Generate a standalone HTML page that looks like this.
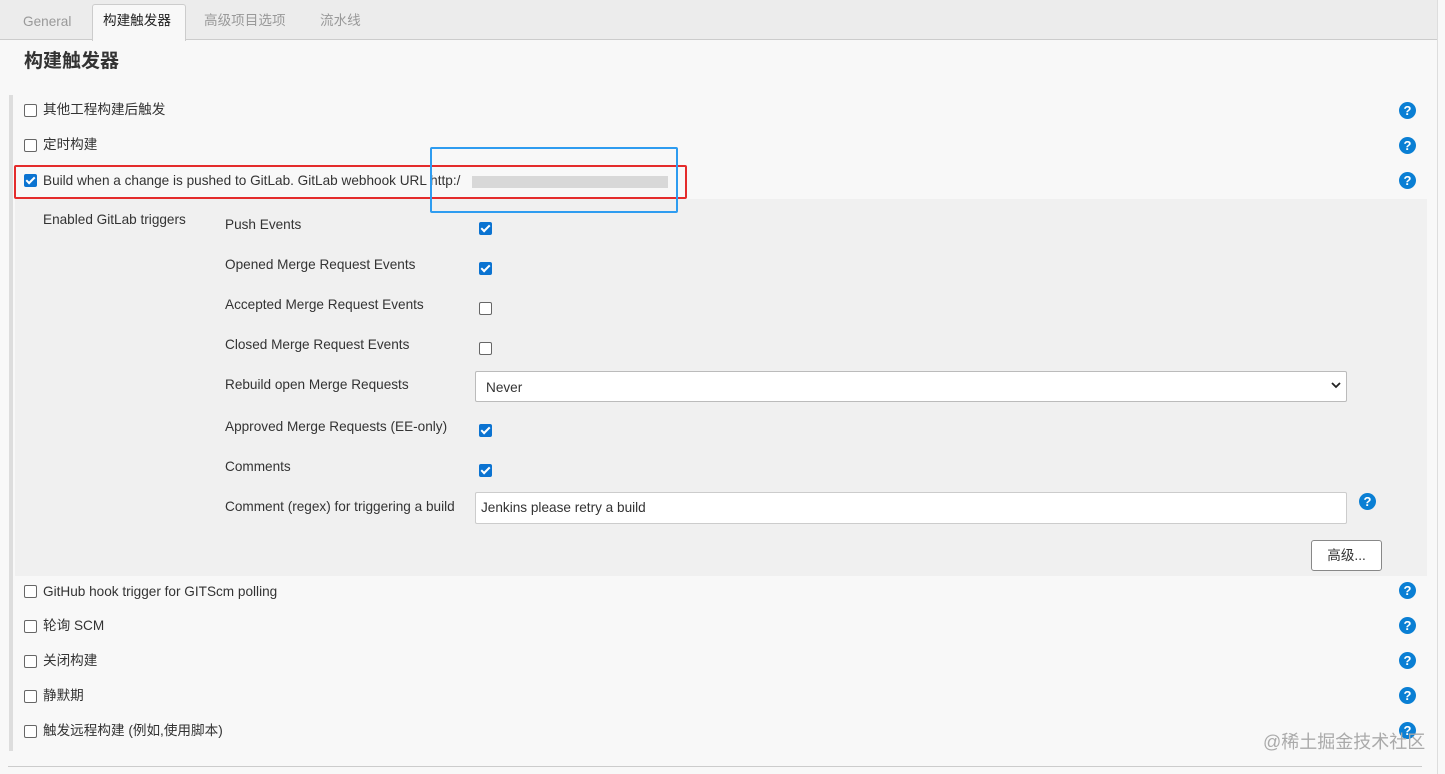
<!DOCTYPE html><html><head><meta charset="utf-8"><style>
body{margin:0;width:1445px;height:774px;background:#f8f8f8;font-family:"Liberation Sans","Noto Sans CJK SC",sans-serif;font-size:13.6px;color:#333;position:relative;overflow:hidden}
.a{position:absolute}
.cb{position:absolute;width:11px;height:11px;border:1px solid #666;border-radius:2px;background:#fff}
.cb.on{background:#0b73d1;border-color:#0b73d1}
.cb.on:after{content:"";position:absolute;left:3px;top:0px;width:3px;height:7px;border:solid #fff;border-width:0 2px 2px 0;transform:rotate(45deg)}
.h{position:absolute;width:17px;height:17px;border-radius:50%;background:#0a7fd4;color:#fff;font-weight:bold;font-size:13px;text-align:center;line-height:17px;font-family:"Liberation Sans",sans-serif}
.t{position:absolute;white-space:nowrap;line-height:16px}
</style></head><body>
<div class="a" style="left:0;top:0;width:1437px;height:39px;background:#ececec;border-bottom:1px solid #ccc"></div>
<div class="t" style="left:23px;top:14px;color:#999">General</div>
<div class="a" style="left:92px;top:4px;width:92px;height:36px;background:#f8f8f8;border:1px solid #ccc;border-bottom:none;border-radius:3px 3px 0 0"></div>
<div class="t" style="left:103px;top:13px;color:#222">构建触发器</div>
<div class="t" style="left:204px;top:13px;color:#999">高级项目选项</div>
<div class="t" style="left:320px;top:13px;color:#999">流水线</div>
<div class="a" style="left:1437px;top:0;width:1px;height:774px;background:#ddd"></div>
<div class="t" style="left:24px;top:50px;font-size:19px;line-height:24px;font-weight:bold;color:#333">构建触发器</div>
<div class="a" style="left:9px;top:95px;width:4px;height:656px;background:#ddd"></div>
<div class="a" style="left:15px;top:199px;width:1412px;height:377px;background:#f0f0f0"></div>
<div class="cb" style="left:24px;top:104px"></div><div class="t" style="left:43px;top:102px">其他工程构建后触发</div><div class="h" style="left:1399px;top:102px">?</div>
<div class="cb" style="left:24px;top:139px"></div><div class="t" style="left:43px;top:137px">定时构建</div><div class="h" style="left:1399px;top:137px">?</div>
<div class="cb on" style="left:24px;top:174px"></div><div class="t" style="left:43px;top:173px">Build when a change is pushed to GitLab. GitLab webhook URL http:/</div><div class="h" style="left:1399px;top:172px">?</div>
<div class="a" style="left:472px;top:176px;width:196px;height:12px;background:#d8d8d8"></div>
<div class="a" style="left:14px;top:165px;width:669px;height:30px;border:2px solid #e42b2b;border-radius:2px"></div>
<div class="a" style="left:430px;top:147px;width:244px;height:62px;border:2px solid #2e9cf0;border-radius:2px"></div>
<div class="t" style="left:43px;top:212px">Enabled GitLab triggers</div>
<div class="t" style="left:225px;top:217px">Push Events</div><div class="cb on" style="left:479px;top:222px"></div>
<div class="t" style="left:225px;top:257px">Opened Merge Request Events</div><div class="cb on" style="left:479px;top:262px"></div>
<div class="t" style="left:225px;top:297px">Accepted Merge Request Events</div><div class="cb" style="left:479px;top:302px"></div>
<div class="t" style="left:225px;top:337px">Closed Merge Request Events</div><div class="cb" style="left:479px;top:342px"></div>
<div class="t" style="left:225px;top:377px">Rebuild open Merge Requests</div>
<div class="a" style="left:475px;top:371px;width:870px;height:29px;background:#fff;border:1px solid #bbb;border-radius:2px"></div>
<div class="t" style="left:486px;top:380px">Never</div>
<svg class="a" style="left:1331px;top:382px" width="10" height="7"><path d="M1 1 L5 5 L9 1" stroke="#222" stroke-width="1.8" fill="none"/></svg>
<div class="t" style="left:225px;top:419px">Approved Merge Requests (EE-only)</div><div class="cb on" style="left:479px;top:424px"></div>
<div class="t" style="left:225px;top:459px">Comments</div><div class="cb on" style="left:479px;top:464px"></div>
<div class="t" style="left:225px;top:499px">Comment (regex) for triggering a build</div>
<div class="a" style="left:475px;top:492px;width:870px;height:30px;background:#fff;border:1px solid #ccc;border-radius:2px"></div>
<div class="t" style="left:481px;top:500px">Jenkins please retry a build</div><div class="h" style="left:1359px;top:493px">?</div>
<div class="a" style="left:1311px;top:540px;width:69px;height:29px;background:#fff;border:1px solid #888;border-radius:3px;text-align:center;line-height:29px">高级...</div>
<div class="cb" style="left:24px;top:585px"></div><div class="t" style="left:43px;top:584px">GitHub hook trigger for GITScm polling</div><div class="h" style="left:1399px;top:582px">?</div>
<div class="cb" style="left:24px;top:620px"></div><div class="t" style="left:43px;top:618px">轮询 SCM</div><div class="h" style="left:1399px;top:617px">?</div>
<div class="cb" style="left:24px;top:655px"></div><div class="t" style="left:43px;top:653px">关闭构建</div><div class="h" style="left:1399px;top:652px">?</div>
<div class="cb" style="left:24px;top:690px"></div><div class="t" style="left:43px;top:688px">静默期</div><div class="h" style="left:1399px;top:687px">?</div>
<div class="cb" style="left:24px;top:725px"></div><div class="t" style="left:43px;top:723px">触发远程构建 (例如,使用脚本)</div><div class="h" style="left:1399px;top:722px">?</div>
<div class="t" style="left:1263px;top:731px;font-size:18px;line-height:22px;color:#aaa">@稀土掘金技术社区</div>
<div class="a" style="left:8px;top:766px;width:1414px;height:1px;background:#ccc"></div>
</body></html>
